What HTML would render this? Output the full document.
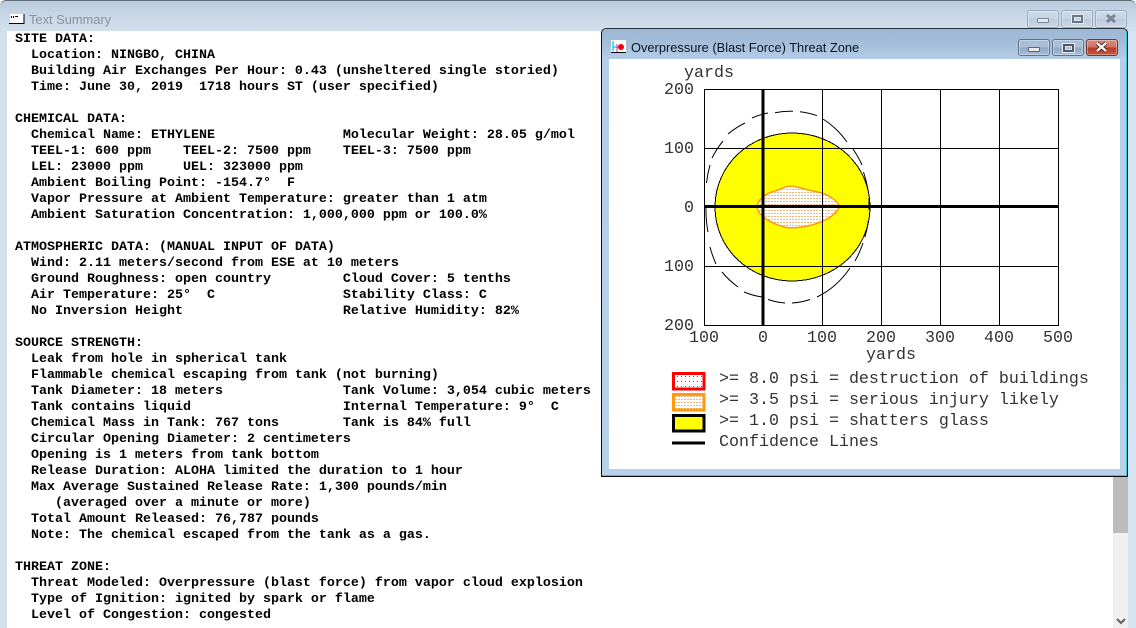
<!DOCTYPE html>
<html><head><meta charset="utf-8"><style>
*{margin:0;padding:0;box-sizing:border-box}
html,body{width:1136px;height:628px;overflow:hidden;background:#fff}
.a{position:absolute}
#outer{left:0;top:0;width:1136px;height:628px;background:linear-gradient(#bccbdc 0,#c6d5e5 12px,#d3e0ee 31px);border-top:1px solid #5f6d7a;border-radius:6px 6px 0 0}
#client{left:7px;top:31px;width:1121px;height:597px;background:#fff}
#edge{left:1128px;top:31px;width:8px;height:597px;background:#d7e4f2}
pre{position:absolute;left:15px;top:32px;font:bold 13.333px/16px "Liberation Mono",monospace;color:#000;white-space:pre}
#track{left:1113px;top:476px;width:15px;height:152px;background:#f0f0f0}
#thumb{left:1113px;top:476px;width:15px;height:57px;background:#bcbcbc}
.tt{font:12.85px/16px "Liberation Sans",sans-serif}
#child{left:601px;top:28px;width:527px;height:449px;border:1px solid #0c0c0c;border-top-color:#2a3440;border-radius:5px 5px 0 0;background:linear-gradient(#9db7d4 0,#a4bdd9 14px,#b4cde9 31px,#b8d1eb 100%);box-shadow:inset 0 -1px 0 #39c6dc,inset -1px 0 0 #39c6dc}
#cc{left:609px;top:59px;width:511px;height:410px;background:#fff}
.b{position:absolute;border:1px solid #76889c;border-radius:3px;box-shadow:inset 0 0 0 1px rgba(255,255,255,.35)}
.o{background:linear-gradient(#cfdbe8 0,#c5d3e3 50%,#bccbdc 50%,#c8d6e5 100%);border-color:#9aabbd}
.c{background:linear-gradient(#a9bed6 0,#aabfd7 48%,#8ca6c4 50%,#a7bdd6 100%);border-color:#5f7288}
.r{background:linear-gradient(#dc8d81 0,#d2705f 48%,#b93a22 52%,#c6573f 100%);border-color:#6d3a3a}
.m{position:absolute;left:9px;top:7px;width:12px;height:5px;background:#e8eaee;border:1px solid #5e6670;border-radius:1px}
.x{position:absolute;left:10px;top:4px;width:11px;height:8px;border:2px solid #4e5866;background:#dfe5ec;box-shadow:0 0 0 1px #e6ebf1}
.x i{position:absolute;left:1px;top:1px;width:5px;height:2px;background:#a9bcd2}
svg{position:absolute;left:0;top:0}
svg text{font-family:"Liberation Mono",monospace;font-size:16.667px;fill:#333}
</style></head><body>
<div class="a" id="outer"></div>
<div class="a" id="client"></div>
<div class="a" id="edge"></div>
<svg width="30" height="32" style="left:0;top:0"><rect x="10" y="14" width="14" height="9" fill="#fff"/><path d="M9 23.5H24.500M24 14V23" stroke="#000"/><path d="M11 16h1v2h-1zM13 16h1v2h-1zM15 16h3v1h-3z" fill="#000"/></svg>
<div class="a tt" style="left:29px;top:12px;color:#8a929a">Text Summary</div>
<div class="b o" style="left:1027px;top:10px;width:32px;height:18px"><span class="m" style="background:#e6e9ed;border-color:#7a8592"></span></div>
<div class="b o" style="left:1061px;top:10px;width:32px;height:18px"><span class="x" style="border-color:#6a7585"><i style="background:#c3d0de"></i></span></div>
<div class="b o" style="left:1095px;top:10px;width:32px;height:18px"><svg width="30" height="16"><path d="M11 4l8 7M19 4l-8 7" stroke="#7b8490" stroke-width="3"/></svg></div>
<pre>SITE DATA:
  Location: NINGBO, CHINA
  Building Air Exchanges Per Hour: 0.43 (unsheltered single storied)
  Time: June 30, 2019  1718 hours ST (user specified)

CHEMICAL DATA:
  Chemical Name: ETHYLENE                Molecular Weight: 28.05 g/mol
  TEEL-1: 600 ppm    TEEL-2: 7500 ppm    TEEL-3: 7500 ppm
  LEL: 23000 ppm     UEL: 323000 ppm
  Ambient Boiling Point: -154.7&deg;  F
  Vapor Pressure at Ambient Temperature: greater than 1 atm
  Ambient Saturation Concentration: 1,000,000 ppm or 100.0%

ATMOSPHERIC DATA: (MANUAL INPUT OF DATA)
  Wind: 2.11 meters/second from ESE at 10 meters
  Ground Roughness: open country         Cloud Cover: 5 tenths
  Air Temperature: 25&deg;  C                Stability Class: C
  No Inversion Height                    Relative Humidity: 82%

SOURCE STRENGTH:
  Leak from hole in spherical tank
  Flammable chemical escaping from tank (not burning)
  Tank Diameter: 18 meters               Tank Volume: 3,054 cubic meters
  Tank contains liquid                   Internal Temperature: 9&deg;  C
  Chemical Mass in Tank: 767 tons        Tank is 84% full
  Circular Opening Diameter: 2 centimeters
  Opening is 1 meters from tank bottom
  Release Duration: ALOHA limited the duration to 1 hour
  Max Average Sustained Release Rate: 1,300 pounds/min
     (averaged over a minute or more)
  Total Amount Released: 76,787 pounds
  Note: The chemical escaped from the tank as a gas.

THREAT ZONE:
  Threat Modeled: Overpressure (blast force) from vapor cloud explosion
  Type of Ignition: ignited by spark or flame
  Level of Congestion: congested</pre>
<div class="a" id="track"></div>
<div class="a" id="thumb"></div>
<svg width="1136" height="628" style="pointer-events:none"><path d="M1117 619l4 4 4-4" fill="none" stroke="#606060" stroke-width="2"/></svg>
<div class="a" id="child"></div>
<div class="a" id="cc"></div>
<div class="a tt" style="left:631px;top:40px;color:#0c1420">Overpressure (Blast Force) Threat Zone</div>
<div class="b c" style="left:1018px;top:39px;width:32px;height:17px"><span class="m"></span></div>
<div class="b c" style="left:1052px;top:39px;width:32px;height:17px"><span class="x"><i></i></span></div>
<div class="b r" style="left:1086px;top:39px;width:32px;height:17px"><svg width="30" height="15"><path d="M10 3l9 8M19 3l-9 8" stroke="#3f1a14" stroke-width="4"/><path d="M10 3l9 8M19 3l-9 8" stroke="#fff" stroke-width="2.400"/></svg></div>
<svg width="1136" height="628">
<defs>
<pattern id="dots" width="3" height="3" patternUnits="userSpaceOnUse"><rect width="3" height="3" fill="#fff"/><rect width="2" height="1" fill="#f2b878"/></pattern>
<pattern id="dots2" width="4" height="5" patternUnits="userSpaceOnUse"><rect width="4" height="5" fill="#fff"/><rect x="1" y="1" width="1" height="1" fill="#e03030"/></pattern>
</defs>
<rect x="611" y="40" width="15" height="13" fill="#fff"/>
<path d="M611 52.500H626" stroke="#000"/><path d="M613 41V51M613 47H618" stroke="#20d0e8" stroke-width="1.500"/><path d="M617 44v8" stroke="#e020c0"/><circle cx="621" cy="47" r="3" fill="#f00000"/>

<text x="684" y="77">yards</text>
<text x="664" y="94">200</text><text x="664" y="153">100</text><text x="684" y="212">0</text><text x="664" y="271">100</text><text x="664" y="330">200</text>
<text x="689" y="342">100</text><text x="758" y="342">0</text><text x="807" y="342">100</text><text x="866" y="342">200</text><text x="925" y="342">300</text><text x="984" y="342">400</text><text x="1043" y="342">500</text>
<text x="866" y="359">yards</text>

<g shape-rendering="crispEdges">
<path d="M715 207C715 165 750 133 792 133C835 133 870 165 870 207C870 249 835 281 792 281C750 281 715 249 715 207Z" fill="#ffff00" stroke="#000"/>
<path d="M757 206C759 198 767 193 775 191C781 189 786 186 790 186C796 186 806 190 818 192C828 194 836 200 840 206C836 215 826 221 812 225C804 227 796 228 789 228C779 226 769 222 762 216C759 213 757 210 757 206Z" fill="url(#dots)" stroke="#ff9a10" stroke-width="1.500"/>
</g>
<g stroke="#000" fill="none" shape-rendering="crispEdges">
<path d="M704.500 89.500H1058.500V325.500H704.500Z"/>
<path d="M822.500 89V325M881.500 89V325M940.500 89V325M999.500 89V325M704 148.500H1058M704 266.500H1058"/>
<path d="M763 89V325" stroke-width="3"/><path d="M704 206.500H1058" stroke-width="3"/>
</g>
<g stroke="#000" fill="none" stroke-width="1">
<path d="M775 112.700A82 96 0 0 1 793 111.300M800 111.700A82 96 0 0 1 817 115.700M823 119A82 96 0 0 1 847 142M853 149A82 96 0 0 1 862 165M863.500 172A82 96 0 0 1 868 190M869 198V210M868.500 220A82 96 0 0 1 865 237M863 243A82 96 0 0 1 855 261M850 268A82 96 0 0 1 817 297M810 299.500A82 96 0 0 1 792 303M785 303A82 96 0 0 1 768 299.500M762 297A82 96 0 0 1 744 292M738 287A82 96 0 0 1 722 272M716 264A82 96 0 0 1 710 247M708 232A82 96 0 0 1 706 208M706.500 183A82 96 0 0 1 710 165M712 158A82 96 0 0 1 723 141M728 134A82 96 0 0 1 745 123M752 118A82 96 0 0 1 768 113"/>
</g>

<rect x="673.500" y="373.500" width="30.500" height="15.500" fill="url(#dots2)" stroke="#ff0000" stroke-width="3" shape-rendering="crispEdges"/>
<rect x="673.500" y="394.500" width="30.500" height="15.500" fill="url(#dots)" stroke="#ff9a10" stroke-width="3" shape-rendering="crispEdges"/>
<rect x="673.500" y="415.500" width="30.500" height="15.500" fill="#ffff00" stroke="#000" stroke-width="3" shape-rendering="crispEdges"/>
<path d="M672 443H705" stroke="#000" stroke-width="3"/>
<text x="719" y="383">&gt;= 8.0 psi = destruction of buildings</text>
<text x="719" y="404">&gt;= 3.5 psi = serious injury likely</text>
<text x="719" y="425">&gt;= 1.0 psi = shatters glass</text>
<text x="719" y="446">Confidence Lines</text>
</svg>
</body></html>
